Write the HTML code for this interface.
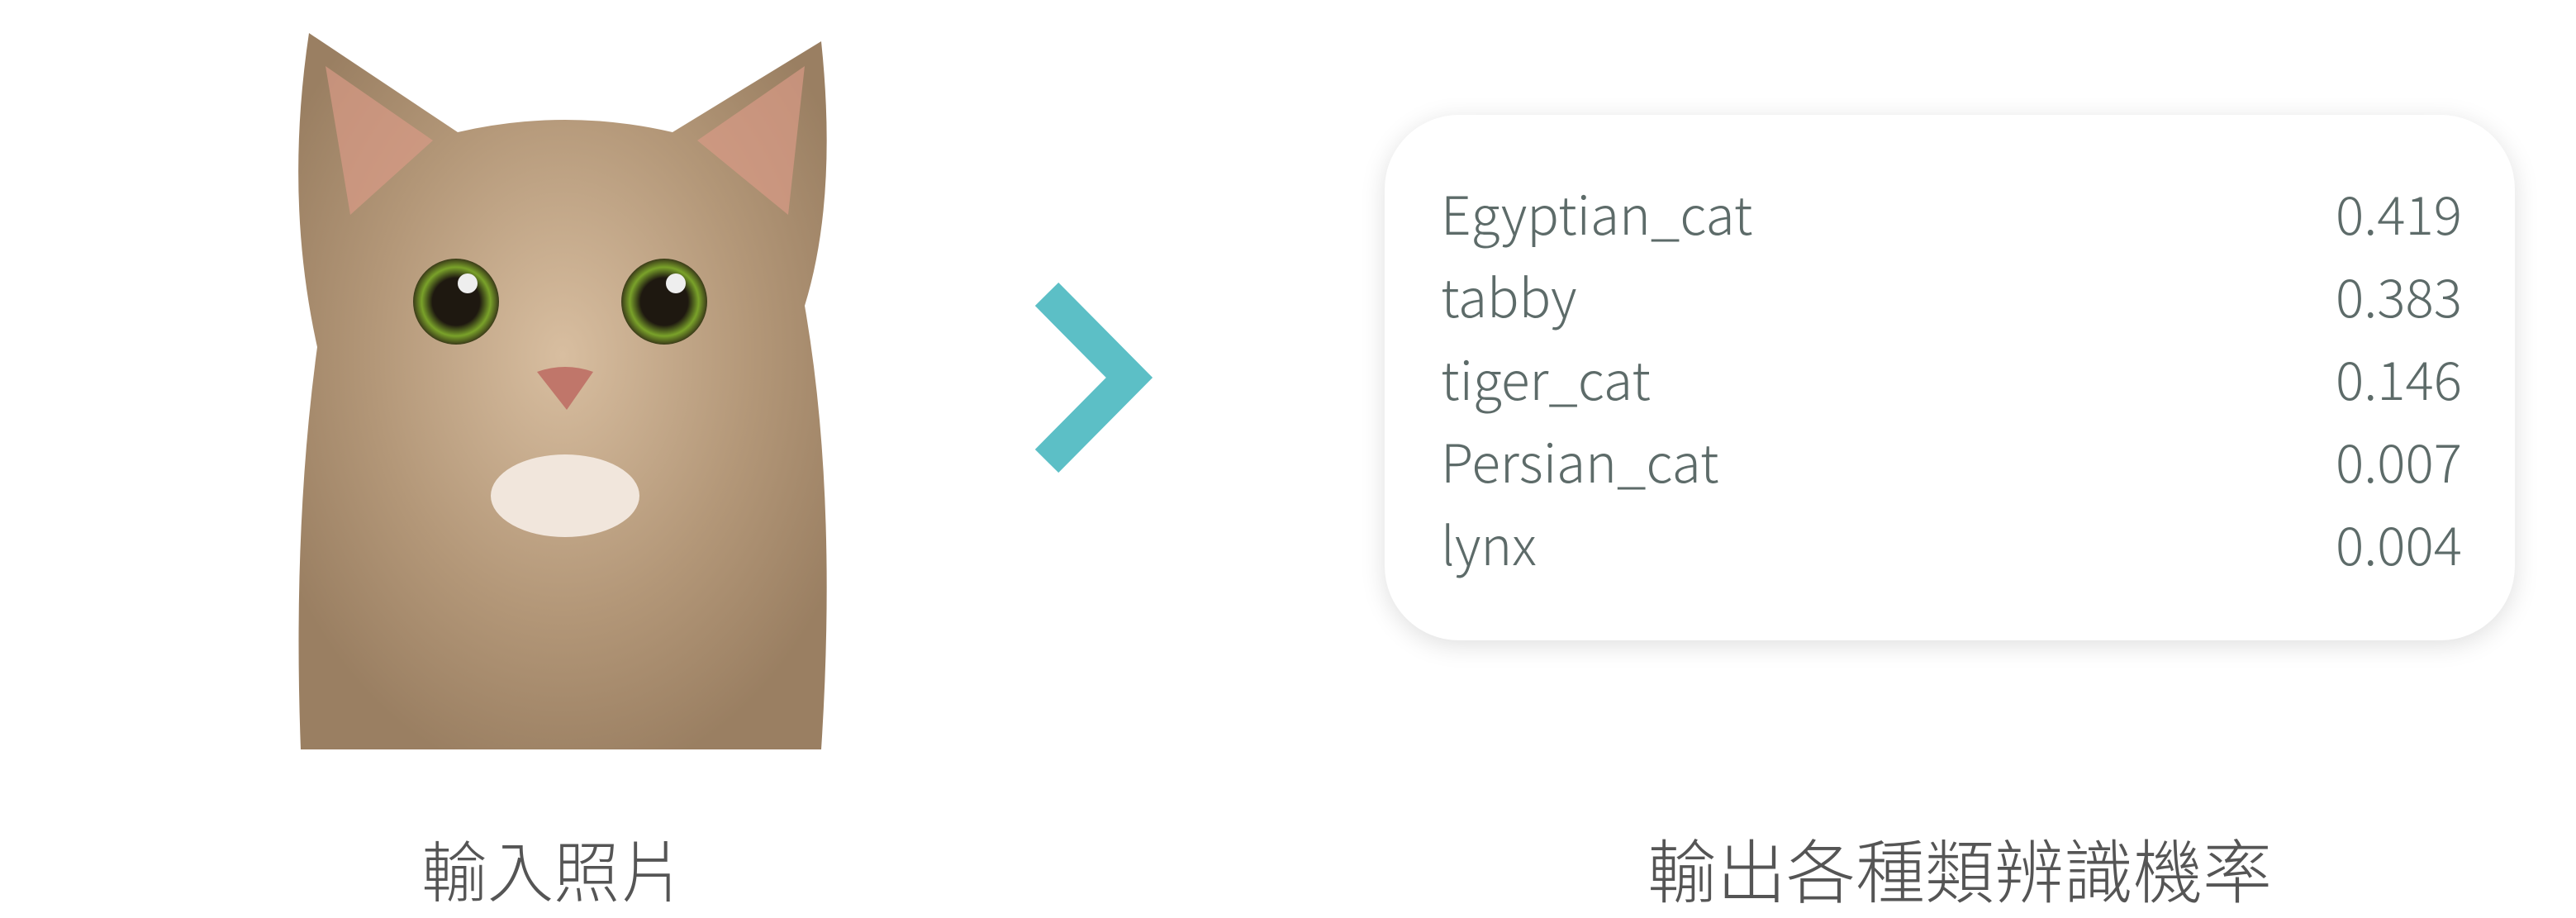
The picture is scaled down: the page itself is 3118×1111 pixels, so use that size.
<!DOCTYPE html>
<html><head><meta charset="utf-8"><style>
html,body{margin:0;padding:0;background:#fff;}
body{width:3118px;height:1103px;position:relative;overflow:hidden;font-family:"Liberation Sans","Noto Sans CJK TC",sans-serif;}
.card{position:absolute;left:1676px;top:139px;width:1368px;height:636px;background:#fff;border-radius:90px;box-shadow:0 6px 30px rgba(0,0,0,0.13);}
.row{position:absolute;left:68px;right:64px;height:100px;font-size:64px;color:#5d6b69;display:flex;justify-content:space-between;font-family:"Noto Sans CJK TC","Liberation Sans",sans-serif;font-weight:300;}
.lab{position:absolute;top:993px;font-size:80px;color:#555;font-family:"Noto Sans CJK TC",sans-serif;font-weight:300;white-space:nowrap;transform:translateX(-50%);}
</style></head><body>
<svg style="position:absolute;left:354px;top:40px" width="660" height="870" viewBox="0 0 660 870">
<defs>
<radialGradient id="fur" cx="50%" cy="45%" r="60%"><stop offset="0" stop-color="#d8bea0"/><stop offset="0.6" stop-color="#b39778"/><stop offset="1" stop-color="#9a7f62"/></radialGradient>
<radialGradient id="eye" cx="50%" cy="50%" r="50%"><stop offset="0.55" stop-color="#1e1810"/><stop offset="0.8" stop-color="#7aa22a"/><stop offset="1" stop-color="#3a3a18"/></radialGradient>
</defs>
<path d="M20 0 L200 120 Q330 90 460 120 L640 10 Q660 200 620 330 Q660 560 640 867 L10 867 Q0 600 30 380 Q-10 200 20 0Z" fill="url(#fur)"/>
<path d="M40 40 L170 130 L70 220Z" fill="#d99a86" opacity="0.7"/>
<path d="M620 40 L490 130 L600 220Z" fill="#d99a86" opacity="0.7"/>
<ellipse cx="330" cy="560" rx="90" ry="50" fill="#f1e6dc"/>
<circle cx="198" cy="325" r="52" fill="url(#eye)"/>
<circle cx="450" cy="325" r="52" fill="url(#eye)"/>
<circle cx="212" cy="303" r="12" fill="#eee"/>
<circle cx="464" cy="303" r="12" fill="#eee"/>
<path d="M296 410 Q330 398 364 410 L332 456Z" fill="#c0766a"/>
</svg>
<svg style="position:absolute;left:1253px;top:342px" width="142" height="230" viewBox="0 0 142 230">
<path d="M14 14 L114 115 L14 216" fill="none" stroke="#5cbfc6" stroke-width="40"/>
</svg>
<div class="card">
<div class="row" style="top:72px"><span>Egyptian_cat</span><span>0.419</span></div>
<div class="row" style="top:172px"><span>tabby</span><span>0.383</span></div>
<div class="row" style="top:272px"><span>tiger_cat</span><span>0.146</span></div>
<div class="row" style="top:372px"><span>Persian_cat</span><span>0.007</span></div>
<div class="row" style="top:472px"><span>lynx</span><span>0.004</span></div>
</div>
<div class="lab" style="left:670px">輸入照片</div>
<div class="lab" style="left:2372px;font-size:84px;top:990px">輸出各種類辨識機率</div>
</body></html>
